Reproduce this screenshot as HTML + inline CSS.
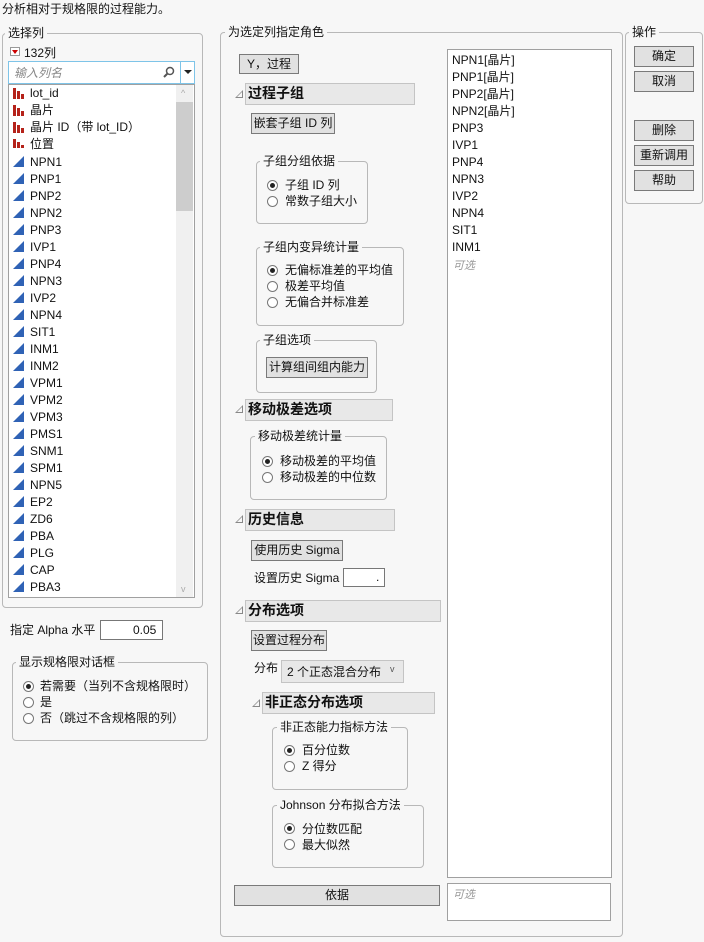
<!DOCTYPE html>
<html><head><meta charset="utf-8">
<style>
*{box-sizing:border-box;margin:0;padding:0}
body{width:704px;height:942px;background:#f7f7f7;font-family:"Liberation Sans","Noto Sans CJK SC",sans-serif;font-size:12px;color:#111;position:relative;overflow:hidden}
.a{position:absolute;white-space:nowrap;line-height:14px}
.g{position:absolute;border:1px solid #b8b8b8;border-radius:4px}
.gl{position:absolute;background:#f7f7f7;padding:0 3px;line-height:14px;white-space:nowrap}
.btn{position:absolute;background:#e1e1e1;border:1px solid #7a7a7a;text-align:center;line-height:18px;white-space:nowrap;font-size:12px}
.hd{position:absolute;background:#e8e8e8;border:1px solid #c4c4c4;font-weight:bold;font-size:14px;line-height:19px;padding-left:2px}
.tri{position:absolute;width:0;height:0;border-left:8px solid transparent;border-bottom:8px solid #888}
.tri:after{content:"";position:absolute;left:-6px;top:2px;border-left:5px solid transparent;border-bottom:5px solid #f7f7f7}
.r{position:absolute;width:11px;height:11px;border:1px solid #777;border-radius:50%;background:#fff}
.r.on:after{content:"";position:absolute;left:2px;top:2px;width:5px;height:5px;border-radius:50%;background:#222}
.list{position:absolute;background:#fff;border:1px solid #a0a0a0}
.ci{position:absolute;left:14px;width:12px;height:11px}
</style></head><body>
<div class="a" style="left:2px;top:2px">分析相对于规格限的过程能力。</div>

<!-- left group -->
<div class="g" style="left:2px;top:33px;width:201px;height:575px"></div>
<div class="gl" style="left:5px;top:26px">选择列</div>
<div style="position:absolute;left:10px;top:47px;width:10px;height:9px;border:1px solid #999;background:#fff"><div style="position:absolute;left:1px;top:2px;border-left:3px solid transparent;border-right:3px solid transparent;border-top:4px solid #c00"></div></div>
<div class="a" style="left:24px;top:46px">132列</div>
<div style="position:absolute;left:8px;top:61px;width:187px;height:23px;border:1px solid #7ec4e8;background:#fff"></div>
<div class="a" style="left:14px;top:66px;color:#888;font-style:italic">输入列名</div>
<svg style="position:absolute;left:163px;top:66px" width="12" height="12"><circle cx="7" cy="5" r="3.5" fill="none" stroke="#555" stroke-width="1.5"/><line x1="4.5" y1="7.5" x2="1" y2="11" stroke="#555" stroke-width="2"/></svg>
<div style="position:absolute;left:180px;top:62px;width:1px;height:21px;background:#7ec4e8"></div>
<div style="position:absolute;left:184px;top:70px;border-left:4px solid transparent;border-right:4px solid transparent;border-top:4px solid #222"></div>
<div class="list" style="left:8px;top:84px;width:187px;height:514px"></div>
<div style="position:absolute;left:176px;top:85px;width:17px;height:512px;background:#f0f0f0"></div>
<div style="position:absolute;left:176px;top:102px;width:17px;height:109px;background:#cdcdcd"></div>
<div class="a" style="left:181px;top:86px;color:#aaa;font-size:9px">^</div>
<div class="a" style="left:181px;top:582px;color:#aaa;font-size:9px">v</div>
<div id="lst"></div>

<div class="a" style="left:10px;top:623px">指定 Alpha 水平</div>
<div style="position:absolute;left:100px;top:620px;width:63px;height:20px;border:1px solid #777;background:#fff"></div>
<div class="a" style="left:133px;top:623px">0.05</div>

<div class="g" style="left:12px;top:662px;width:196px;height:79px"></div>
<div class="gl" style="left:16px;top:655px">显示规格限对话框</div>
<div class="r on" style="left:23px;top:681px"></div><div class="a" style="left:40px;top:679px">若需要（当列不含规格限时）</div>
<div class="r" style="left:23px;top:697px"></div><div class="a" style="left:40px;top:695px">是</div>
<div class="r" style="left:23px;top:713px"></div><div class="a" style="left:40px;top:711px">否（跳过不含规格限的列）</div>

<!-- middle group -->
<div class="g" style="left:220px;top:32px;width:403px;height:905px"></div>
<div class="gl" style="left:225px;top:25px">为选定列指定角色</div>
<div class="btn" style="left:239px;top:54px;width:60px;height:20px">Y，过程</div>

<div class="tri" style="left:235px;top:90px"></div>
<div class="hd" style="left:245px;top:83px;width:170px;height:22px">过程子组</div>
<div class="btn" style="left:251px;top:113px;width:84px;height:21px">嵌套子组 ID 列</div>
<div class="g" style="left:256px;top:161px;width:112px;height:63px"></div>
<div class="gl" style="left:260px;top:154px">子组分组依据</div>
<div class="r on" style="left:267px;top:180px"></div><div class="a" style="left:285px;top:178px">子组 ID 列</div>
<div class="r" style="left:267px;top:196px"></div><div class="a" style="left:285px;top:194px">常数子组大小</div>
<div class="g" style="left:256px;top:247px;width:148px;height:79px"></div>
<div class="gl" style="left:260px;top:240px">子组内变异统计量</div>
<div class="r on" style="left:267px;top:265px"></div><div class="a" style="left:285px;top:263px">无偏标准差的平均值</div>
<div class="r" style="left:267px;top:281px"></div><div class="a" style="left:285px;top:279px">极差平均值</div>
<div class="r" style="left:267px;top:297px"></div><div class="a" style="left:285px;top:295px">无偏合并标准差</div>
<div class="g" style="left:256px;top:340px;width:121px;height:53px"></div>
<div class="gl" style="left:260px;top:333px">子组选项</div>
<div class="btn" style="left:266px;top:357px;width:102px;height:21px">计算组间组内能力</div>

<div class="tri" style="left:235px;top:405px"></div>
<div class="hd" style="left:245px;top:399px;width:148px;height:22px">移动极差选项</div>
<div class="g" style="left:250px;top:436px;width:137px;height:64px"></div>
<div class="gl" style="left:255px;top:429px">移动极差统计量</div>
<div class="r on" style="left:262px;top:456px"></div><div class="a" style="left:280px;top:454px">移动极差的平均值</div>
<div class="r" style="left:262px;top:472px"></div><div class="a" style="left:280px;top:470px">移动极差的中位数</div>

<div class="tri" style="left:235px;top:515px"></div>
<div class="hd" style="left:245px;top:509px;width:150px;height:22px">历史信息</div>
<div class="btn" style="left:251px;top:540px;width:92px;height:21px">使用历史 Sigma</div>
<div class="a" style="left:254px;top:571px">设置历史 Sigma</div>
<div style="position:absolute;left:343px;top:568px;width:42px;height:19px;border:1px solid #777;background:#fff"></div>
<div class="a" style="left:376px;top:570px">.</div>

<div class="tri" style="left:235px;top:606px"></div>
<div class="hd" style="left:245px;top:600px;width:196px;height:22px">分布选项</div>
<div class="btn" style="left:251px;top:630px;width:76px;height:21px">设置过程分布</div>
<div class="a" style="left:254px;top:661px">分布</div>
<div style="position:absolute;left:281px;top:660px;width:123px;height:23px;background:#e8e8e8;border:1px solid #c4c4c4"></div>
<div class="a" style="left:287px;top:665px">2 个正态混合分布</div>
<div class="a" style="left:390px;top:662px;font-size:9px;color:#555">v</div>

<div class="tri" style="left:252px;top:699px"></div>
<div class="hd" style="left:262px;top:692px;width:173px;height:22px">非正态分布选项</div>
<div class="g" style="left:272px;top:727px;width:136px;height:63px"></div>
<div class="gl" style="left:277px;top:720px">非正态能力指标方法</div>
<div class="r on" style="left:284px;top:745px"></div><div class="a" style="left:302px;top:743px">百分位数</div>
<div class="r" style="left:284px;top:761px"></div><div class="a" style="left:302px;top:759px">Z 得分</div>
<div class="g" style="left:272px;top:805px;width:152px;height:63px"></div>
<div class="gl" style="left:277px;top:798px">Johnson 分布拟合方法</div>
<div class="r on" style="left:284px;top:823px"></div><div class="a" style="left:302px;top:822px">分位数匹配</div>
<div class="r" style="left:284px;top:839px"></div><div class="a" style="left:302px;top:838px">最大似然</div>

<div class="btn" style="left:234px;top:885px;width:206px;height:21px">依据</div>

<div class="list" style="left:447px;top:49px;width:165px;height:829px"></div>
<div id="rl"></div>
<div class="a" style="left:453px;top:259px;color:#999;font-style:italic;font-size:11px">可选</div>
<div class="list" style="left:447px;top:883px;width:164px;height:38px"></div>
<div class="a" style="left:453px;top:888px;color:#999;font-style:italic;font-size:11px">可选</div>

<!-- actions -->
<div class="g" style="left:625px;top:32px;width:78px;height:172px"></div>
<div class="gl" style="left:629px;top:25px">操作</div>
<div class="btn" style="left:634px;top:46px;width:60px;height:21px">确定</div>
<div class="btn" style="left:634px;top:71px;width:60px;height:21px">取消</div>
<div class="btn" style="left:634px;top:120px;width:60px;height:21px">删除</div>
<div class="btn" style="left:634px;top:145px;width:60px;height:21px">重新调用</div>
<div class="btn" style="left:634px;top:170px;width:60px;height:21px">帮助</div>

<div style="position:absolute;left:0;top:0">
<!-- left list items -->
<div class="a" style="left:30px;top:86px">lot_id</div>
<div class="a" style="left:30px;top:103px">晶片</div>
<div class="a" style="left:30px;top:120px">晶片 ID（带 lot_ID）</div>
<div class="a" style="left:30px;top:137px">位置</div>
</div>
<svg style="position:absolute;left:13px;top:88px" width="14" height="60">
<g fill="#b5221a"><g id="b"><rect x="0" y="0" width="3" height="11"/><rect x="4" y="3" width="3" height="8"/><rect x="8" y="6" width="3" height="5"/></g>
<use href="#b" y="17"/><use href="#b" y="34"/><use href="#b" y="51"/></g></svg>
<svg style="position:absolute;left:13px;top:156px" width="14" height="440">
<defs><polygon id="t" points="0,11 11,0 11,11" fill="#2f62b5"/></defs>
<use href="#t" y="0"/><use href="#t" y="17"/><use href="#t" y="34"/><use href="#t" y="51"/><use href="#t" y="68"/><use href="#t" y="85"/><use href="#t" y="102"/><use href="#t" y="119"/><use href="#t" y="136"/><use href="#t" y="153"/><use href="#t" y="170"/><use href="#t" y="187"/><use href="#t" y="204"/><use href="#t" y="221"/><use href="#t" y="238"/><use href="#t" y="255"/><use href="#t" y="272"/><use href="#t" y="289"/><use href="#t" y="306"/><use href="#t" y="323"/><use href="#t" y="340"/><use href="#t" y="357"/><use href="#t" y="374"/><use href="#t" y="391"/><use href="#t" y="408"/><use href="#t" y="425"/>
</svg>
<div style="position:absolute;left:30px;top:154px;line-height:17px;font-size:12px">NPN1<br>PNP1<br>PNP2<br>NPN2<br>PNP3<br>IVP1<br>PNP4<br>NPN3<br>IVP2<br>NPN4<br>SIT1<br>INM1<br>INM2<br>VPM1<br>VPM2<br>VPM3<br>PMS1<br>SNM1<br>SPM1<br>NPN5<br>EP2<br>ZD6<br>PBA<br>PLG<br>CAP<br>PBA3</div>
<div style="position:absolute;left:452px;top:52px;line-height:17px;font-size:12px">NPN1[晶片]<br>PNP1[晶片]<br>PNP2[晶片]<br>NPN2[晶片]<br>PNP3<br>IVP1<br>PNP4<br>NPN3<br>IVP2<br>NPN4<br>SIT1<br>INM1</div>
</body></html>
